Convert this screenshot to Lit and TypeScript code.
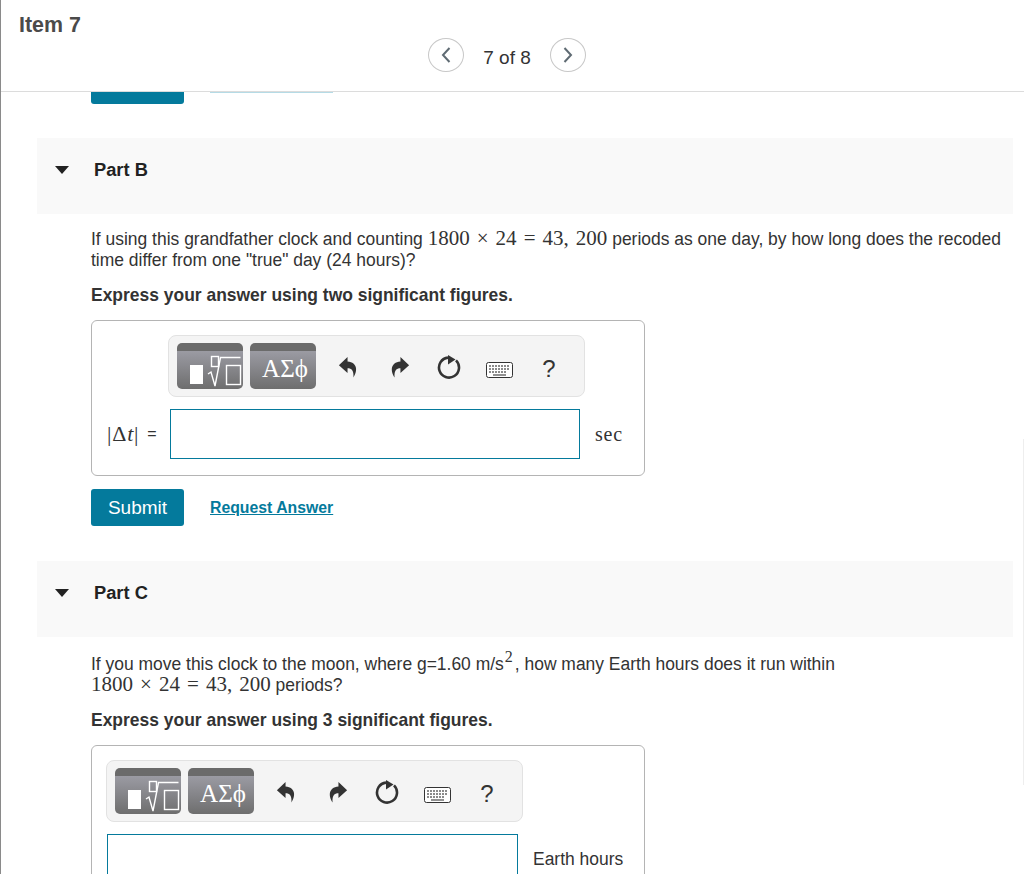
import { LitElement, html, css } from "lit";
import { customElement } from "lit/decorators.js";

const undoIcon = html`<svg class="icon icon-undo" viewBox="0 0 22 24" width="20" height="22"><path d="M10.500 1 L1 10 L10.500 18.500 V13.500 C15 13.500 17.500 16 17 23.500 C21.500 17 22 7 10.500 6 Z" fill="#333" /></svg>`;
const redoIcon = html`<svg class="icon icon-redo" viewBox="0 0 22 24" width="20" height="22"><path d="M11.500 1 L21 10 L11.500 18.500 V13.500 C7 13.500 4.500 16 5 23.500 C0.500 17 0 7 11.500 6 Z" fill="#333" /></svg>`;
const resetIcon = html`<svg class="icon icon-reset" viewBox="0 0 24 25" width="24" height="25"><path d="M11 2.600 A10 10 0 1 0 19 5.400" fill="none" stroke="#333" stroke-width="2.600" /><path d="M11 0 L18.500 4.500 L11 9.500 Z" fill="#333" /></svg>`;
const keyboardIcon = html`<svg class="icon icon-keys" viewBox="0 0 27 16" width="27" height="16"><rect x="0.500" y="0.500" width="26" height="15" rx="2" fill="#fff" stroke="#333" /><path d="M3 4 H24 M3 7 H24 M3 10 H21" stroke="#666" stroke-width="1.300" stroke-dasharray="2 1" /><path d="M7 13 H20" stroke="#555" stroke-width="1.300" /></svg>`;
const templateIcon = html`<svg viewBox="0 0 66 46" width="66" height="46"><rect x="13" y="22" width="13" height="19" fill="#fff" /><rect x="34.500" y="13.500" width="7" height="10" fill="none" stroke="#fff" stroke-width="1.400" /><path d="M31 31 L34 29 L38 43 L43.500 14.500 H63.500" fill="none" stroke="#fff" stroke-width="1.400" /><rect x="49.500" y="22.500" width="14" height="19" fill="none" stroke="#fff" stroke-width="1.400" /></svg>`;

@customElement("app-root")
export class AppRoot extends LitElement {
  static styles = css`
    :host {
      display: block;
      position: relative;
      width: 1024px;
      height: 874px;
      box-sizing: border-box;
      overflow: hidden;
      border-left: 1px solid #8a8a8a;
      background: #fff;
      font-family: "Liberation Sans", Arial, sans-serif;
      font-size: 17.470px;
      color: #333;
    }

    .scroll-thumb {
      position: absolute;
      top: 439px;
      right: 0;
      width: 1px;
      height: 346px;
      background: #eee;
    }

    .header {
      height: 92px;
      box-sizing: border-box;
      border-bottom: 1px solid #dcdcdc;
    }
    .item-title {
      margin: 0;
      padding: 12px 0 0 18px;
      font-size: 21.400px;
      line-height: 26px;
      font-weight: bold;
      color: #4a4a4a;
    }
    .pager {
      display: flex;
      align-items: center;
      margin: -1px 0 0 427px;
      height: 36px;
      color: #333;
    }
    .pager-btn {
      width: 36px;
      height: 34px;
      box-sizing: border-box;
      display: flex;
      align-items: center;
      justify-content: center;
      border: 1px solid #c8c8c8;
      border-radius: 50%;
      background: #fff;
      padding: 0;
    }
    .pager-count {
      width: 86px;
      text-align: center;
      font-size: 19px;
      padding-top: 6px;
    }

    .prev-actions {
      display: flex;
      height: 46px;
      padding-left: 90px;
      align-items: flex-start;
    }
    .prev-submit {
      width: 93px;
      height: 12px;
      background: #047a9c;
      border-radius: 0 0 3px 3px;
    }
    .prev-link {
      width: 123px;
      height: 1px;
      margin-left: 26px;
      background: #b5dbe6;
    }

    .part-head {
      display: flex;
      align-items: center;
      height: 76px;
      margin: 0 11px 0 36px;
      padding-bottom: 13px;
      box-sizing: border-box;
      background: #f9f9f9;
    }
    .caret {
      width: 0;
      height: 0;
      margin-left: 18px;
      border-left: 7.500px solid transparent;
      border-right: 7.500px solid transparent;
      border-top: 8px solid #222;
    }
    .part-title {
      margin: 0 0 0 25px;
      font-size: 18.300px;
      line-height: 24px;
      font-weight: bold;
      color: #222;
    }

    .part-body {
      padding: 15px 10px 0 90px;
    }
    .part-body.moon {
      padding-top: 17px;
    }
    .prompt {
      margin: 0;
      line-height: 21px;
    }
    .math {
      font-family: "Liberation Serif", "Times New Roman", serif;
      font-size: 21px;
      line-height: 0;
      word-spacing: 1.800px;
    }
    .math sup {
      font-size: 16px;
      line-height: 0;
      margin: 0 2px 0 1px;
    }
    .hint {
      margin: 12px 0 0;
      line-height: 24px;
      font-weight: bold;
    }

    .answer {
      width: 554px;
      box-sizing: border-box;
      margin-top: 13px;
      padding: 14px 15px 16px;
      border: 1px solid #b4b4b4;
      border-radius: 6px;
    }
    .toolbar {
      display: flex;
      align-items: center;
      width: 417px;
      height: 62px;
      box-sizing: border-box;
      margin-left: -1px;
      padding: 0 8px;
      gap: 7px;
      background: #f4f4f4;
      border: 1px solid #e2e2e2;
      border-radius: 8px;
    }
    .toolbar.with-label {
      margin-left: 61px;
    }
    .tpl-btn {
      flex: none;
      width: 66px;
      height: 46px;
      box-sizing: border-box;
      display: flex;
      align-items: center;
      justify-content: center;
      border-radius: 5px;
      border-top: 8px solid #6b6b6b;
      background: linear-gradient(#9b9ba3, #6e6e6e);
      font-family: "Liberation Serif", serif;
      font-size: 25px;
      color: #fff;
    }
    .tpl-btn.greek {
      padding: 0 0 2px 4px;
    }
    .tpl-btn svg {
      margin-top: -8px;
      flex: none;
    }
    .tools {
      flex: none;
      display: flex;
      align-items: center;
      margin-left: -2px;
      color: #333;
    }
    .tool {
      width: 51px;
      display: flex;
      justify-content: center;
    }
    .tool-help {
      font-size: 24px;
      line-height: 28px;
      padding-top: 5px;
      box-sizing: border-box;
      padding-right: 3px;
    }
    .icon-undo {
      margin: 2px 0 0 2px;
    }
    .icon-redo {
      margin: 2px 0 0 4px;
    }
    .icon-reset {
      margin-top: 3px;
    }
    .icon-keys {
      margin-top: 7px;
    }

    .answer-row {
      display: flex;
      align-items: center;
      margin-top: 12px;
    }
    .label {
      display: flex;
      align-items: center;
      width: 63px;
      font-size: 16px;
      white-space: nowrap;
    }
    .label-math {
      font-family: "Liberation Serif", serif;
      font-size: 22px;
      letter-spacing: 0.800px;
      margin-right: 8px;
    }
    .input {
      width: 410px;
      height: 50px;
      box-sizing: border-box;
      border: 1px solid #047a9c;
      background: #fff;
    }
    .input.wide {
      width: 411px;
    }
    .unit {
      margin-left: 15px;
    }
    .unit.serif {
      font-family: "Liberation Serif", serif;
      font-size: 20px;
      letter-spacing: 0.800px;
    }

    .actions {
      display: flex;
      align-items: center;
      margin-top: 13px;
      height: 37px;
      margin-bottom: 35px;
    }
    .submit {
      width: 93px;
      height: 37px;
      border: none;
      border-radius: 3px;
      background: #047a9c;
      color: #fff;
      font-family: inherit;
      font-size: 19px;
      padding: 0;
    }
    .request {
      margin-left: 26px;
      font-size: 15.800px;
      font-weight: bold;
      color: #047a9c;
      text-decoration: underline;
    }
  `;

  renderTools() {
    return html`
      <div class="tpl-btn">${templateIcon}</div>
      <div class="tpl-btn greek">ΑΣϕ</div>
      <div class="tools">
        <span class="tool">${undoIcon}</span>
        <span class="tool">${redoIcon}</span>
        <span class="tool">${resetIcon}</span>
        <span class="tool">${keyboardIcon}</span>
        <span class="tool tool-help">?</span>
      </div>
    `;
  }

  renderHead(name: string) {
    return html`
      <div class="part-head">
        <span class="caret"></span>
        <h3 class="part-title">${name}</h3>
      </div>
    `;
  }

  render() {
    return html`
      <header class="header">
        <h2 class="item-title">Item 7</h2>
        <nav class="pager">
          <button class="pager-btn" aria-label="Previous">
            <svg viewBox="0 0 12 18" width="12" height="18"><path d="M9.500 2 L3 9 L9.500 16" fill="none" stroke="#5f6b73" stroke-width="2" /></svg>
          </button>
          <span class="pager-count">7 of 8</span>
          <button class="pager-btn" aria-label="Next">
            <svg viewBox="0 0 12 18" width="12" height="18"><path d="M2.500 2 L9 9 L2.500 16" fill="none" stroke="#5f6b73" stroke-width="2" /></svg>
          </button>
        </nav>
      </header>

      <div class="prev-actions">
        <div class="prev-submit"></div>
        <div class="prev-link"></div>
      </div>

      ${this.renderHead("Part B")}
      <section class="part-body">
        <p class="prompt">If using this grandfather clock and counting <span class="math">1800 × 24 = 43, 200</span> periods as one day, by how long does the recoded time differ from one "true" day (24 hours)?</p>
        <p class="hint">Express your answer using two significant figures.</p>
        <div class="answer">
          <div class="toolbar with-label">${this.renderTools()}</div>
          <div class="answer-row">
            <span class="label"><span class="label-math">|Δ<i>t</i>|</span>=</span>
            <div class="input"></div>
            <span class="unit serif">sec</span>
          </div>
        </div>
        <div class="actions">
          <button class="submit">Submit</button>
          <a class="request">Request Answer</a>
        </div>
      </section>

      ${this.renderHead("Part C")}
      <section class="part-body moon">
        <p class="prompt">If you move this clock to the moon, where g=1.60 m/s<span class="math"><sup>2</sup></span>, how many Earth hours does it run within<br /><span class="math">1800 × 24 = 43, 200</span> periods?</p>
        <p class="hint">Express your answer using 3 significant figures.</p>
        <div class="answer">
          <div class="toolbar">${this.renderTools()}</div>
          <div class="answer-row">
            <div class="input wide"></div>
            <span class="unit">Earth hours</span>
          </div>
        </div>
      </section>
      <div class="scroll-thumb"></div>
    `;
  }
}
